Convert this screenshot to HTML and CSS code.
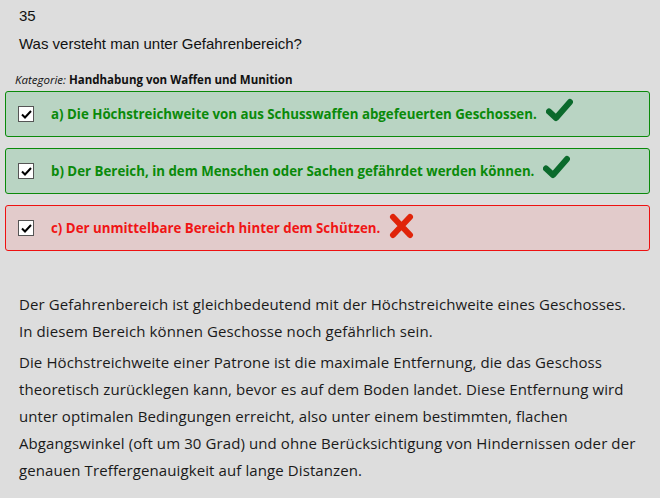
FILE: index.html
```html
<!DOCTYPE html>
<html lang="de">
<head>
<meta charset="utf-8">
<link rel="stylesheet" href="styles.css">
</head>
<body>
<div class="page">
  <div class="qnum">35</div>
  <div class="question">Was versteht man unter Gefahrenbereich?</div>
  <div class="category"><span class="cat-label">Kategorie:</span> <span class="cat-name">Handhabung von Waffen und Munition</span></div>
  <div class="answers">
    <div class="answer correct">
      <span class="box"><svg width="11" height="9" viewBox="0 0 11 9"><path d="M1 4.5 L4 7.5 L10 1" fill="none" stroke="#000" stroke-width="2"/></svg></span>
      <span class="atext">a) Die Höchstreichweite von aus Schusswaffen abgefeuerten Geschossen.</span>
      <svg class="icon" width="27" height="24" viewBox="0 0 27 24"><path d="M3 13.5 L10 20 L24 4" fill="none" stroke="#0b6a2c" stroke-width="6" stroke-linecap="round" stroke-linejoin="round"/></svg>
    </div>
    <div class="answer correct">
      <span class="box"><svg width="11" height="9" viewBox="0 0 11 9"><path d="M1 4.5 L4 7.5 L10 1" fill="none" stroke="#000" stroke-width="2"/></svg></span>
      <span class="atext">b) Der Bereich, in dem Menschen oder Sachen gefährdet werden können.</span>
      <svg class="icon" width="27" height="24" viewBox="0 0 27 24"><path d="M3 13.5 L10 20 L24 4" fill="none" stroke="#0b6a2c" stroke-width="6" stroke-linecap="round" stroke-linejoin="round"/></svg>
    </div>
    <div class="answer wrong">
      <span class="box"><svg width="11" height="9" viewBox="0 0 11 9"><path d="M1 4.5 L4 7.5 L10 1" fill="none" stroke="#000" stroke-width="2"/></svg></span>
      <span class="atext">c) Der unmittelbare Bereich hinter dem Schützen.</span>
      <svg class="icon xicon" width="25" height="26" viewBox="0 0 25 26"><path d="M4 4 L21 22 M21 4 L4 22" fill="none" stroke="#e0240a" stroke-width="6" stroke-linecap="round"/></svg>
    </div>
  </div>
  <div class="explain">
    <p>Der Gefahrenbereich ist gleichbedeutend mit der Höchstreichweite eines Geschosses. In diesem Bereich können Geschosse noch gefährlich sein.</p>
    <p>Die Höchstreichweite einer Patrone ist die maximale Entfernung, die das Geschoss theoretisch zurücklegen kann, bevor es auf dem Boden landet. Diese Entfernung wird unter optimalen Bedingungen erreicht, also unter einem bestimmten, flachen Abgangswinkel (oft um 30 Grad) und ohne Berücksichtigung von Hindernissen oder der genauen Treffergenauigkeit auf lange Distanzen.</p>
  </div>
</div>
</body>
</html>
```
FILE: styles.css
```css
html, body {
  margin: 0;
  padding: 0;
  background: #dddddd;
}
.page {
  padding: 7px 10px 0 5px;
  color: #111;
}
.qnum {
  font-family: "Liberation Sans", Arial, sans-serif;
  font-size: 15px;
  line-height: 18px;
  padding-left: 14px;
}
.question {
  font-family: "Liberation Sans", Arial, sans-serif;
  font-size: 15px;
  line-height: 18px;
  padding-left: 14px;
  margin-top: 10px;
}
.category {
  font-family: "Open Sans", sans-serif;
  font-size: 11.5px;
  line-height: 14px;
  padding-left: 10px;
  margin-top: 20px;
}
.cat-label {
  font-style: italic;
}
.cat-name {
  font-weight: bold;
}
.answers {
  display: flex;
  flex-direction: column;
  gap: 11px;
  margin-top: 4px;
}
.answer {
  display: flex;
  align-items: center;
  height: 44px;
  border: 1px solid #0a8a0a;
  border-radius: 3px;
  box-sizing: content-box;
  background: #b9d4c3;
  padding-left: 12px;
}
.answer.wrong {
  border-color: #ee1111;
  background: #e2cbcb;
}
.box {
  width: 16px;
  height: 16px;
  border: 1px solid #555;
  background: #fff;
  display: flex;
  align-items: center;
  justify-content: center;
  box-sizing: border-box;
  flex: none;
}
.atext {
  font-family: "Open Sans", sans-serif;
  font-weight: bold;
  font-size: 13.3px;
  color: #0a8a0a;
  margin-left: 17px;
}
.wrong .atext {
  color: #f01515;
}
.icon {
  margin-left: 9px;
  margin-top: -8px;
}
.xicon {
  margin-top: -4px;
}
.explain {
  font-family: "Open Sans", sans-serif;
  font-size: 15px;
  letter-spacing: 0.1px;
  line-height: 27px;
  padding: 0 8px 0 14px;
  margin-top: 40px;
  color: #1a1a1a;
}
.explain p {
  margin: 0 0 4px 0;
}
```
